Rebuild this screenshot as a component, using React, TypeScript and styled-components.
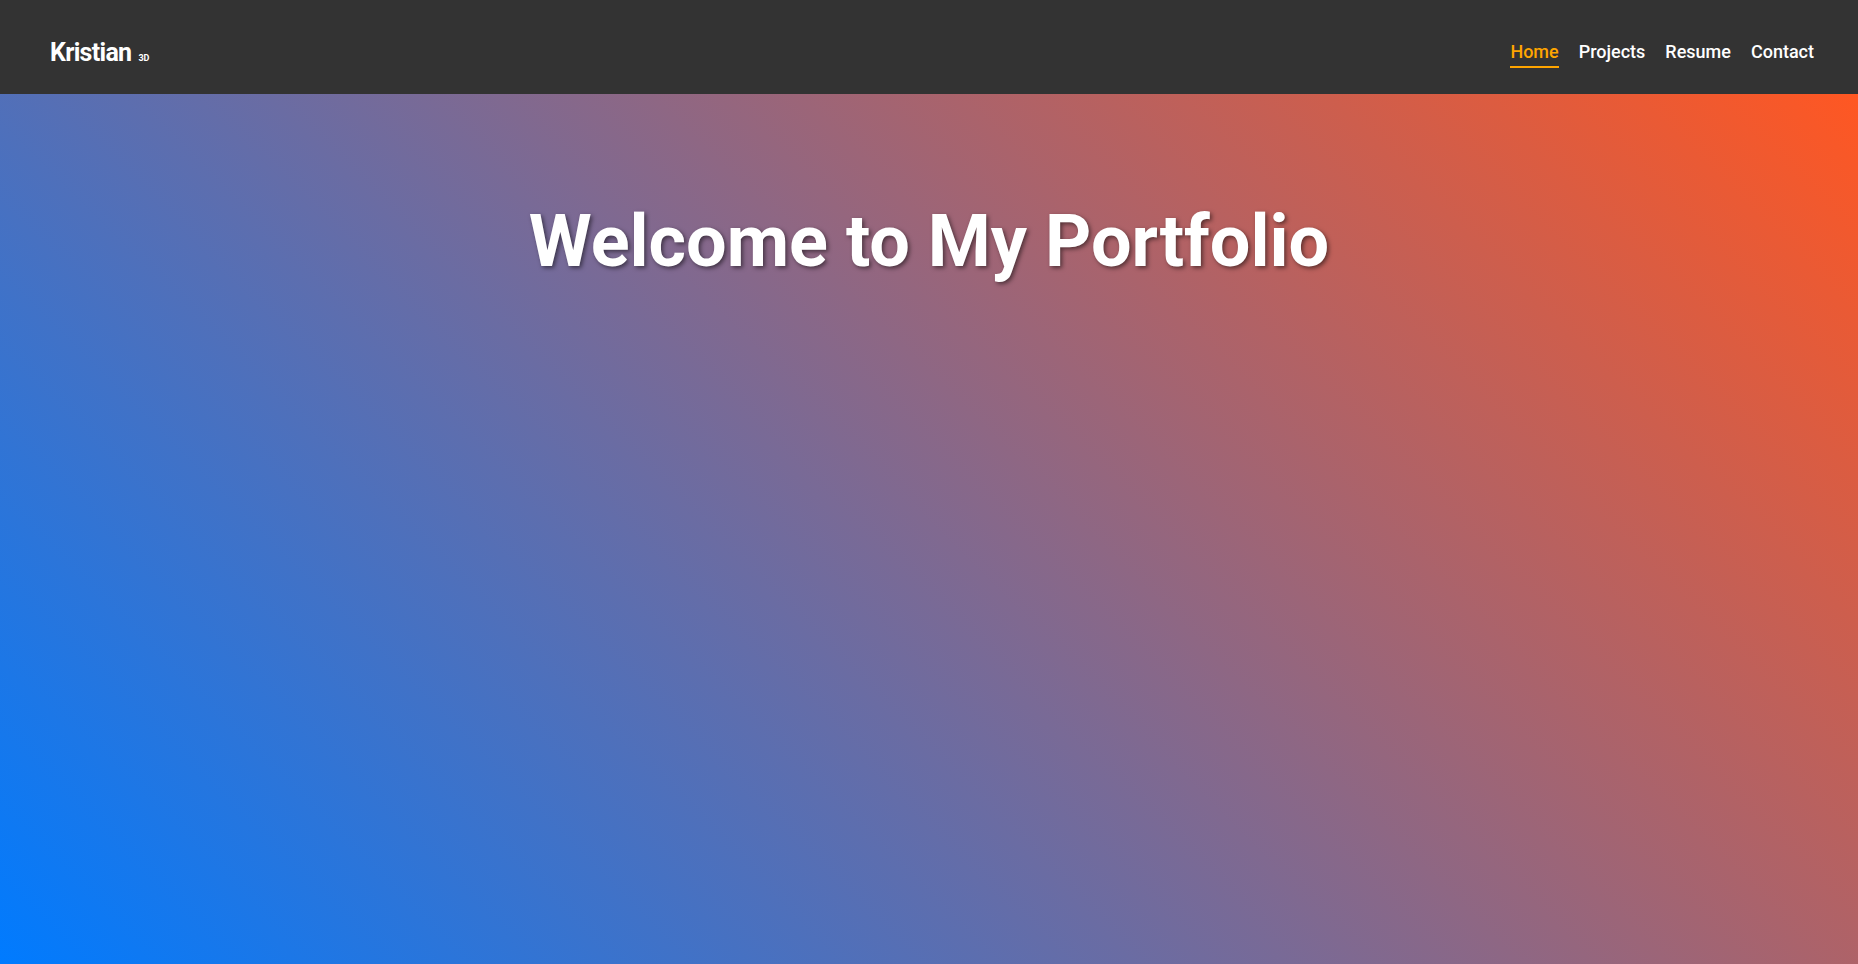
import React from "react";
import styled, { createGlobalStyle } from "styled-components";

const GlobalStyle = createGlobalStyle`
  html, body { margin: 0; padding: 0; height: 100%; }
  body { font-family: Roboto, "Liberation Sans", sans-serif; background: #333; }
  #root { min-height: 100vh; display: flex; flex-direction: column; }
`;

const Header = styled.header`
  height: 94px;
  background: #333333;
  display: flex;
  align-items: flex-start;
  justify-content: space-between;
  padding: 38px 44px 0 50px;
  box-sizing: border-box;
  flex-shrink: 0;
`;

const Logo = styled.div`
  color: #fff;
  font-weight: 700;
  font-size: 25px;
  line-height: normal;
  letter-spacing: -0.7px;
  display: flex;
  align-items: baseline;
  gap: 7px;
`;

const LogoSup = styled.span`
  font-size: 9px;
  font-weight: 700;
  letter-spacing: 0;
`;

const Nav = styled.nav`
  display: flex;
  gap: 20px;
  margin-top: 3px;
`;

const NavLink = styled.a<{ $active?: boolean }>`
  color: ${(p) => (p.$active ? "#ffa500" : "#ffffff")};
  font-size: 18px;
  font-weight: 500;
  line-height: normal;
  text-decoration: none;
  padding-bottom: 4px;
  border-bottom: 2px solid ${(p) => (p.$active ? "#ffa500" : "transparent")};
`;

const Hero = styled.main`
  flex: 1;
  background: linear-gradient(45deg, #007bff, #ff5722);
  display: flex;
  flex-direction: column;
  align-items: center;
  padding-top: 105px;
`;

const Title = styled.h1`
  margin: 0;
  color: #fff;
  font-size: 72px;
  font-weight: 700;
  line-height: normal;
  text-shadow: 2px 2px 4px rgba(0, 0, 0, 0.5);
`;

export default function App() {
  return (
    <>
      <GlobalStyle />
      <Header>
        <Logo>
          Kristian<LogoSup>3D</LogoSup>
        </Logo>
        <Nav>
          <NavLink $active href="#">Home</NavLink>
          <NavLink href="#">Projects</NavLink>
          <NavLink href="#">Resume</NavLink>
          <NavLink href="#">Contact</NavLink>
        </Nav>
      </Header>
      <Hero>
        <Title>Welcome to My Portfolio</Title>
      </Hero>
    </>
  );
}
